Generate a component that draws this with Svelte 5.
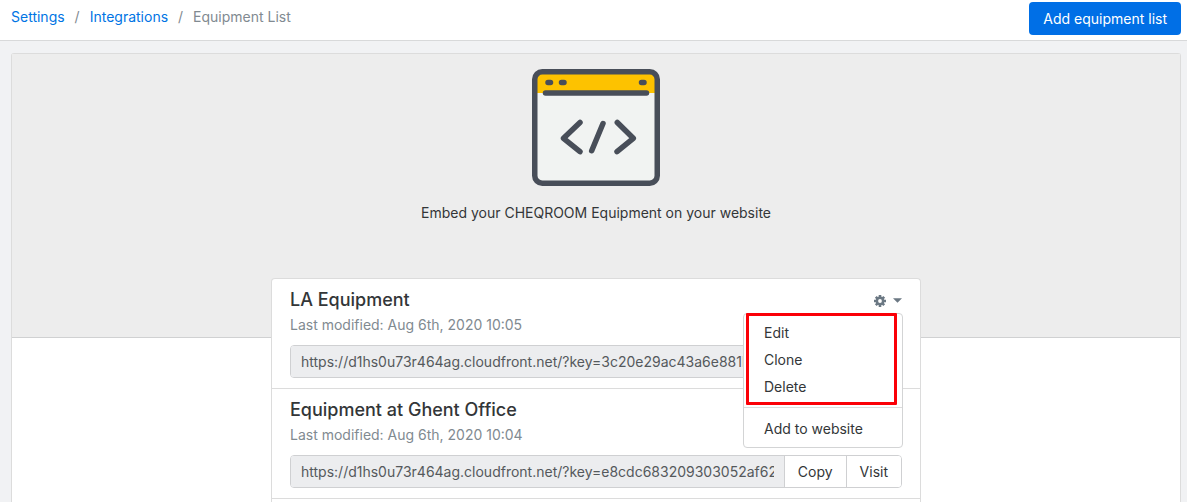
<script>
  const lists = [
    {
      name: 'LA Equipment',
      modified: 'Aug 6th, 2020 10:05',
      url: 'https://d1hs0u73r464ag.cloudfront.net/?key=3c20e29ac43a6e881bd',
      open: true
    },
    {
      name: 'Equipment at Ghent Office',
      modified: 'Aug 6th, 2020 10:04',
      url: 'https://d1hs0u73r464ag.cloudfront.net/?key=e8cdc683209303052af6258',
      open: false
    }
  ];
  const actions = ['Edit', 'Clone', 'Delete'];
</script>

<div class="page">
  <header>
    <nav aria-label="Breadcrumb">
      <a href="#settings">Settings</a>
      <span class="sep">/</span>
      <a href="#integrations">Integrations</a>
      <span class="sep">/</span>
      <span class="current">Equipment List</span>
    </nav>
    <button class="primary" type="button">Add equipment list</button>
  </header>

  <main>
    <section class="hero">
      <svg width="128" height="118" viewBox="0 0 128 118" aria-hidden="true">
        <rect x="2.5" y="2.5" width="123" height="112" rx="8" fill="#f1f3f2" />
        <path d="M3 24V10a8 8 0 0 1 8-8h106a8 8 0 0 1 8 8v14z" fill="#fdc200" />
        <rect x="2.75" y="2.75" width="122.5" height="111.5" rx="7.5" fill="none" stroke="#484e59" stroke-width="5.5" />
        <g fill="none" stroke="#484e59" stroke-width="5.5" stroke-linecap="round" stroke-linejoin="round">
          <path d="M13.5 24h101" />
          <path d="M16 13.5h2.5M29.5 13.5h2.5M109.5 13.500h2.5" />
          <path d="M48 53.5 31.500 69.300 48 82.700M85.300 53.500 101.300 69.300 85 82.700M71 54.500 59.700 81.700" />
        </g>
      </svg>
      <p>Embed your CHEQROOM Equipment on your website</p>
    </section>

    <section class="lists">
      {#each lists as list}
        <article>
          <div class="top">
            <h2>{list.name}</h2>
            <div class="options">
              <button class="gear" type="button" aria-label="Options for {list.name}" class:hidden={!list.open}>
                <svg width="12" height="12" viewBox="0 0 12 12" aria-hidden="true">
                  <g stroke="#6b7883" stroke-width="2.6">
                    <path d="M6 0v12M0 6h12M1.8 1.8l8.4 8.4M10.2 1.8l-8.4 8.4" />
                  </g>
                  <circle cx="6" cy="6" r="4.4" fill="#6b7883" />
                  <circle cx="6" cy="6" r="1.9" fill="#fff" />
                </svg>
                <svg width="9" height="5" viewBox="0 0 9 5" aria-hidden="true">
                  <path d="M0 .3h9L4.5 4.8z" fill="#6b7883" />
                </svg>
              </button>
              {#if list.open}
                <div class="menu">
                  <div class="marked">
                    {#each actions as action}
                      <button type="button">{action}</button>
                    {/each}
                  </div>
                  <hr />
                  <button type="button">Add to website</button>
                </div>
              {/if}
            </div>
          </div>
          <p class="modified">Last modified: {list.modified}</p>
          <div class="link">
            <input type="text" readonly value={list.url} aria-label="Link to {list.name}" />
            <button type="button">Copy</button>
            <button type="button">Visit</button>
          </div>
        </article>
      {/each}
    </section>
  </main>
</div>

<style>
  :global(body) {
    background: #f1f2f4;
  }
  .page,
  .page * {
    box-sizing: border-box;
  }
  .page {
    min-height: 100vh;
    display: flex;
    flex-direction: column;
    font: 14px/20px Inter, "Liberation Sans", sans-serif;
    color: #333638;
  }
  button,
  input {
    font: inherit;
    color: inherit;
    margin: 0;
  }
  button {
    cursor: pointer;
  }
  header {
    display: flex;
    justify-content: space-between;
    align-items: flex-start;
    height: 41px;
    padding: 2px 6px 0 11px;
    background: #fff;
    border-bottom: 1px solid #d8d9da;
  }
  nav {
    display: flex;
    gap: 10px;
    padding-top: 5px;
    color: #818a91;
  }
  nav a {
    color: #0074e4;
    text-decoration: none;
  }
  .primary {
    height: 33px;
    padding: 0 14px;
    border: 0;
    border-radius: 4px;
    background: #006fe6;
    color: #fff;
  }
  main {
    flex: 1;
    display: flex;
    flex-direction: column;
    margin: 12px 6px 0 11px;
    border: 1px solid #dcdcdc;
    border-bottom: 0;
    border-radius: 3px 3px 0 0;
    background: #fff;
  }
  .hero {
    display: flex;
    flex-direction: column;
    align-items: center;
    height: 284px;
    padding-top: 15px;
    background: #ededed;
    border-bottom: 1px solid #d0d1d2;
  }
  .hero p {
    margin: 16px 0 0;
  }
  .lists {
    position: relative;
    flex: 1;
    width: 100%;
    max-width: 650px;
    margin: -60px auto 0;
    border: 1px solid #dcdcdc;
    border-bottom: 0;
    border-radius: 4px 4px 0 0;
    background: #fff;
  }
  article {
    padding: 9px 18px 10px;
    border-bottom: 1px solid #dcdcdc;
  }
  .top {
    display: flex;
    justify-content: space-between;
    height: 25px;
  }
  h2 {
    margin: 0;
    font-size: 18px;
    line-height: 23px;
    font-weight: 500;
  }
  .modified {
    margin: 0 0 8px;
    line-height: 24px;
    color: #818a91;
  }
  .options {
    position: relative;
  }
  .gear {
    display: flex;
    align-items: center;
    gap: 7px;
    height: 25px;
    padding: 0;
    border: 0;
    background: none;
  }
  .hidden {
    visibility: hidden;
  }
  .menu {
    position: absolute;
    z-index: 1;
    top: 25px;
    right: -1px;
    width: 160px;
    padding-bottom: 5px;
    border: 1px solid #d3d4d5;
    border-radius: 4px;
    background: #fff;
  }
  .menu button {
    display: block;
    width: 100%;
    height: 27px;
    padding: 0 20px;
    border: 0;
    background: none;
    text-align: left;
  }
  .marked {
    position: relative;
    padding: 5px 0 7px;
  }
  .marked::after {
    content: "";
    position: absolute;
    inset: -1px 5px 2px 2px;
    border: 3px solid #fb0007;
    border-radius: 1px;
    pointer-events: none;
  }
  hr {
    margin: 0 0 7px;
    border: 0;
    border-top: 1px solid #dcdcdc;
  }
  .link {
    display: flex;
    height: 33px;
    border: 1px solid #cfd0d2;
    border-radius: 4px;
    overflow: hidden;
  }
  .link input {
    flex: 1;
    min-width: 0;
    padding: 0;
    border: 10px solid #ecedef;
    border-width: 0 10px;
    background: #ecedef;
    color: #55595c;
    outline: 0;
  }
  .link button {
    padding: 0 13px;
    border: 0;
    border-left: 1px solid #cfd0d2;
    background: #fff;
  }
</style>
